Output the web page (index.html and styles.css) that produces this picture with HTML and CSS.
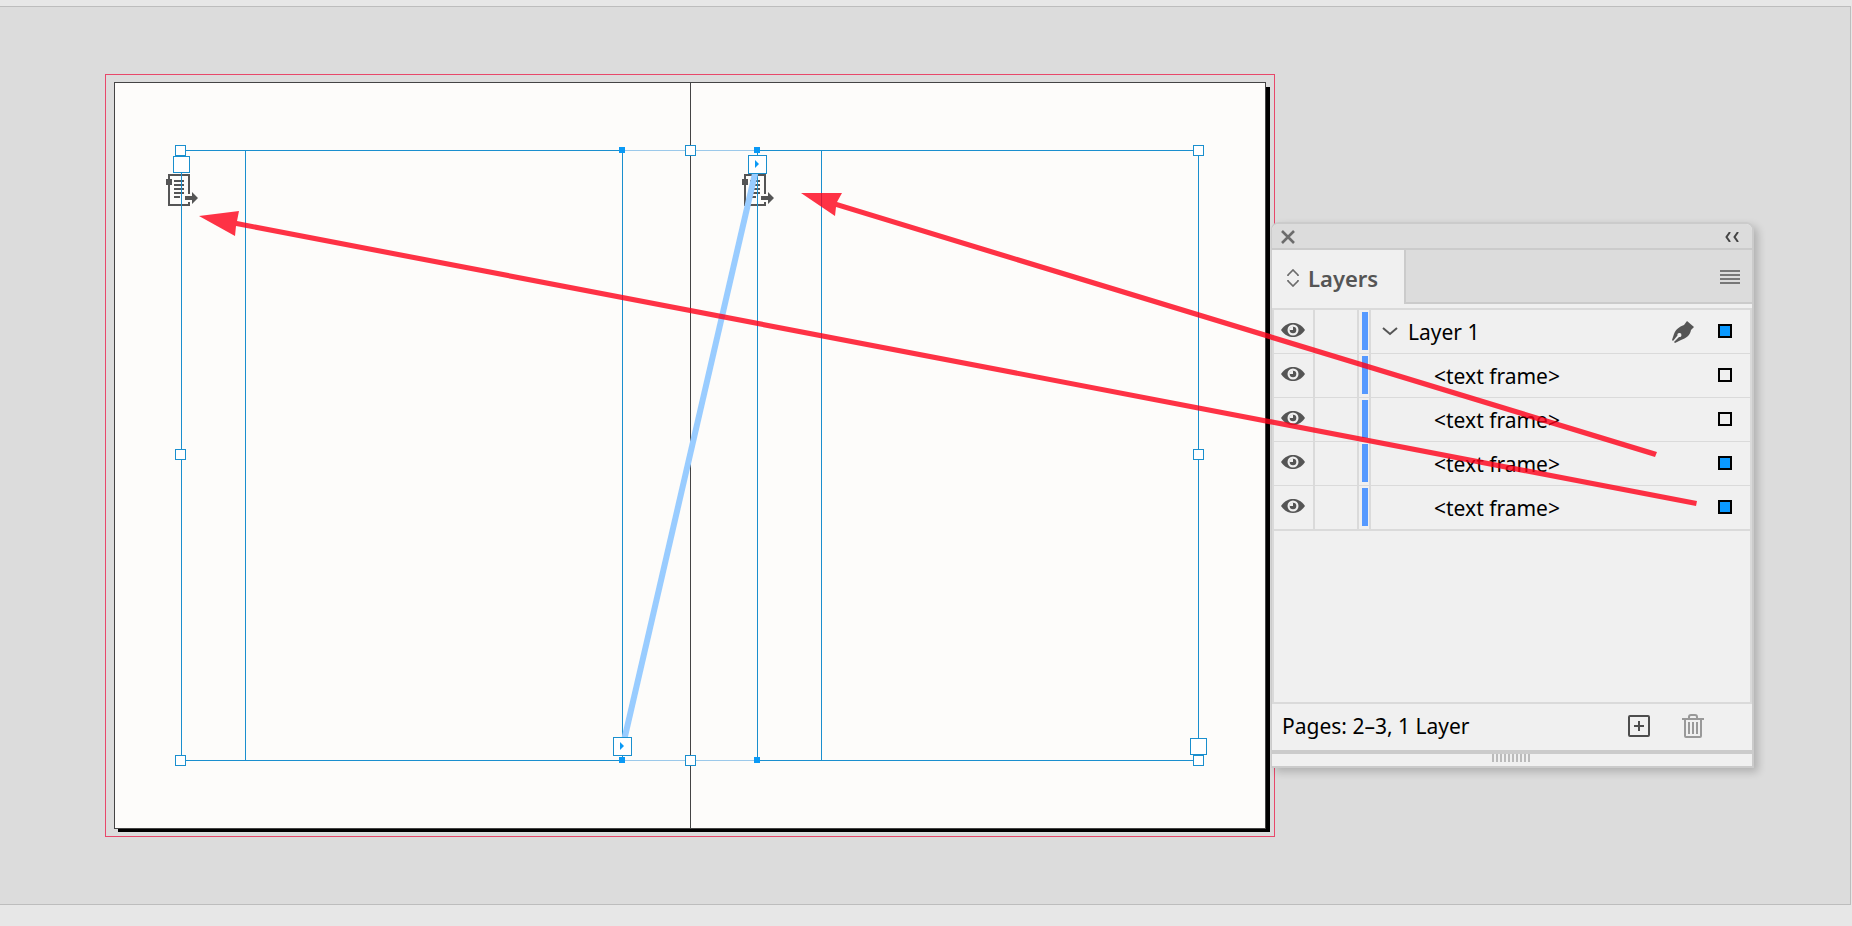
FILE: index.html
```html
<!DOCTYPE html>
<html lang="en">
<head>
    <meta charset="UTF-8">
    <meta name="viewport" content="width=device-width, initial-scale=1.0">
    <title>Layers</title>
    <link rel="stylesheet" href="styles.css">
</head>
<body>
    <!-- shared icons -->
    <svg class="defs" aria-hidden="true">
        <symbol id="eye" viewBox="0 0 24 16">
            <path d="M0 8C4 2.500 8 1 12 1s8 1.500 12 7c-4 5.500-8 7-12 7S4 13.500 0 8z" fill="#555"/>
            <circle cx="12" cy="8" r="5.500" fill="#f0f0f0"/>
            <circle cx="12" cy="8" r="3.300" fill="#555"/>
            <path d="M12 8V4.500L9 5.500 8.500 8z" fill="#f0f0f0"/>
        </symbol>
        <symbol id="autoflow" viewBox="166 174 32 32">
            <path d="M189 194v-19h-20v30h20v-3" fill="none" stroke="#555" stroke-width="2"/>
            <path d="M166 179h6v6h-6zM174 180h10v2h-10zM174 184h10v2h-10zM174 188h10v2h-10zM174 192h10v2h-10zM174 196h6v2h-6zM185 196h7v-4l6 6-6 6v-4h-7z" fill="#555"/>
        </symbol>
    </svg>

    <main class="workspace">
        <svg class="spread" viewBox="105 74 1170 763" role="img" aria-label="Pages 2-3">
            <rect x="105.500" y="74.500" width="1169" height="762" fill="none" stroke="#e8486a"/>
            <rect x="118" y="87" width="1152" height="745" fill="#000"/>
            <rect x="114.500" y="82.500" width="1151" height="746" fill="#fdfcfa" stroke="#444"/>
            <path d="M690.500 83V828" stroke="#444"/>

            <use href="#autoflow" x="166" y="174" width="32" height="32"/>
            <use href="#autoflow" x="742" y="174" width="32" height="32"/>

            <!-- text frames and margins -->
            <path d="M622 150.500H757M622 760.500H757" stroke="#9cc9ea"/>
            <path d="M181 150.500H622M757 150.500H1198M181 760.500H622M757 760.500H1198M181.500 150V760M245.500 150V760M622.500 150V760M757.500 150V760M821.500 150V760M1198.500 150V760" stroke="#1a8fce" fill="none"/>
            <path d="M757 165L623 745" stroke="#99ccff" stroke-width="6"/>

            <g fill="#fff" stroke="#1a8fce">
                <rect x="175.500" y="145.500" width="10" height="10"/>
                <rect x="685.500" y="145.500" width="10" height="10"/>
                <rect x="1193.500" y="145.500" width="10" height="10"/>
                <rect x="175.500" y="449.500" width="10" height="10"/>
                <rect x="1193.500" y="449.500" width="10" height="10"/>
                <rect x="175.500" y="755.500" width="10" height="10"/>
                <rect x="685.500" y="755.500" width="10" height="10"/>
                <rect x="1193.500" y="755.500" width="10" height="10"/>
                <rect x="173.500" y="156.500" width="16" height="16"/>
                <rect x="748.500" y="155.500" width="18" height="18"/>
                <rect x="613.500" y="737.500" width="18" height="18"/>
                <rect x="1190.500" y="738.500" width="16" height="16"/>
            </g>
            <path d="M755 160l4 4-4 4zM620 742l4 4-4 4zM619 147h6v6h-6zM754 147h6v6h-6zM619 757h6v6h-6zM754 757h6v6h-6z" fill="#0a99f5"/>
        </svg>

        <section class="panel" aria-label="Layers panel">
            <header class="titlebar">
                <button aria-label="Close">
                    <svg width="14" height="14" viewBox="0 0 14 14"><path d="M1 1l12 12M13 1L1 13" stroke="#6c6c6c" stroke-width="2.600"/></svg>
                </button>
                <button aria-label="Collapse">
                    <svg width="14" height="10" viewBox="0 0 14 10"><path d="M5 0L1.500 5 5 10M13 0L9.500 5 13 10" fill="none" stroke="#444" stroke-width="2"/></svg>
                </button>
            </header>

            <div class="tabs">
                <button class="tab">
                    <svg width="12" height="18" viewBox="0 0 12 18"><path d="M1 7V6l5-5 5 5v1M1 11v1l5 5 5-5v-1" fill="none" stroke="#6c6c6c" stroke-width="1.700"/></svg>
                    Layers
                </button>
                <button class="menu-btn" aria-label="Panel menu">
                    <svg width="20" height="14" viewBox="0 0 20 14"><path d="M0 1h20M0 5h20M0 9h20M0 13h20" stroke="#777" stroke-width="2"/></svg>
                </button>
            </div>

            <ul class="layers">
                <li>
                    <button class="eye" aria-label="Toggle visibility"><svg width="24" height="16"><use href="#eye"/></svg></button>
                    <span class="lock"></span>
                    <span class="color"></span>
                    <button class="expand" aria-label="Collapse layer">
                        <svg width="16" height="9" viewBox="0 0 16 9"><path d="M1 1l7 6 7-6" fill="none" stroke="#555" stroke-width="2"/></svg>
                    </button>
                    <span class="name">Layer 1</span>
                    <svg class="pen" width="22" height="22" viewBox="0 0 22 22">
                        <path d="M15 0L22 6 19 9C18 15 14 17 9 19L3 22 2 21 7 16A2 2 0 1 0 5.500 14.500L1 20 0 19 2 13C4 8 7 6 12 4z" fill="#555"/>
                    </svg>
                    <button class="select on" aria-label="Select items"></button>
                </li>
                <li>
                    <button class="eye" aria-label="Toggle visibility"><svg width="24" height="16"><use href="#eye"/></svg></button>
                    <span class="lock"></span>
                    <span class="color"></span>
                    <span class="name child">&lt;text frame&gt;</span>
                    <button class="select" aria-label="Select items"></button>
                </li>
                <li>
                    <button class="eye" aria-label="Toggle visibility"><svg width="24" height="16"><use href="#eye"/></svg></button>
                    <span class="lock"></span>
                    <span class="color"></span>
                    <span class="name child">&lt;text frame&gt;</span>
                    <button class="select" aria-label="Select items"></button>
                </li>
                <li>
                    <button class="eye" aria-label="Toggle visibility"><svg width="24" height="16"><use href="#eye"/></svg></button>
                    <span class="lock"></span>
                    <span class="color"></span>
                    <span class="name child">&lt;text frame&gt;</span>
                    <button class="select on" aria-label="Select items"></button>
                </li>
                <li>
                    <button class="eye" aria-label="Toggle visibility"><svg width="24" height="16"><use href="#eye"/></svg></button>
                    <span class="lock"></span>
                    <span class="color"></span>
                    <span class="name child">&lt;text frame&gt;</span>
                    <button class="select on" aria-label="Select items"></button>
                </li>
            </ul>

            <footer class="status">
                <span class="pages">Pages: 2–3, 1 Layer</span>
                <button aria-label="Create new layer">
                    <svg width="22" height="22" viewBox="0 0 22 22"><rect x="1" y="1" width="20" height="20" rx="1" fill="none" stroke="#4d4d4d" stroke-width="2"/><path d="M11 6v10M6 11h10" stroke="#4d4d4d" stroke-width="2"/></svg>
                </button>
                <button aria-label="Delete selected layers">
                    <svg width="22" height="24" viewBox="0 0 22 24"><path d="M0 5h22M7 5V3q0-2 2-2h4q2 0 2 2v2M3 5v17q0 1 1 1h14q1 0 1-1V5M7 8v12M11 8v12M15 8v12" fill="none" stroke="#999" stroke-width="2"/></svg>
                </button>
            </footer>
            <div class="grip"><span></span></div>
        </section>

        <!-- pointers from the selected rows to their frames -->
        <svg class="arrows" viewBox="198 190 1500 318" aria-hidden="true">
            <path d="M199 216L239 211 237 221 1697 501 1696 506 236 226 235 236z"/>
            <path d="M801 193L842 193 837 202 1657 452 1655 457 836 207 835 216z"/>
        </svg>
    </main>
</body>
</html>
```
FILE: styles.css
```css
* {
    box-sizing: border-box;
}

body {
    margin: 0;
    padding: 6px 0 21px;
    min-height: 100vh;
    display: flex;
    background-color: #e7e7e7;
    color: #000;
    font-family: "Noto Sans", "Open Sans", sans-serif;
    font-size: 21px;
}

button {
    display: flex;
    align-items: center;
    margin: 0;
    padding: 0;
    border: 0;
    background: none;
    color: inherit;
    font: inherit;
}

.defs {
    position: absolute;
    width: 0;
    height: 0;
}

.workspace {
    position: relative;
    flex: 1;
    margin-right: 1px;
    border: 1px solid #bdbdbd;
    border-left: 0;
    background-color: #dcdcdc;
    overflow: hidden;
}

/* things lying on the pasteboard */
.spread {
    position: absolute;
    left: 105px;
    top: 67px;
    width: 1170px;
}

.arrows {
    position: absolute;
    left: 198px;
    top: 183px;
    width: 1500px;
    fill: #ff0018;
    opacity: 0.8;
    pointer-events: none;
}

.panel {
    position: absolute;
    left: 1271px;
    top: 215px;
    width: 483px;
    border: 2px solid #cbcbcb;
    border-left-width: 1px;
    border-radius: 8px 8px 0 0;
    background-color: #f0f0f0;
    box-shadow: 4px 4px 8px rgba(0, 0, 0, 0.2);
}

.titlebar {
    display: flex;
    justify-content: space-between;
    align-items: center;
    height: 26px;
    padding: 2px 13px 0 9px;
    border-bottom: 2px solid #cbcbcb;
    border-radius: 6px 6px 0 0;
    background-color: #dcdcdc;
}

.tabs {
    display: flex;
    justify-content: space-between;
    height: 54px;
    margin-bottom: 4px;
    background-color: #dcdcdc;
    box-shadow: inset 0 -2px #cbcbcb;
}

.tab {
    gap: 9px;
    width: 134px;
    padding: 2px 0 0 15px;
    border-right: 2px solid #cbcbcb;
    background-color: #f0f0f0;
    color: #555;
    font-size: 22px;
    font-weight: 600;
}

.menu-btn {
    padding-right: 12px;
}

.layers {
    height: 396px;
    margin: 0;
    padding: 0;
    border: 2px solid #dadada;
    list-style: none;
}

.layers li {
    display: flex;
    align-items: center;
    height: 44px;
    padding-right: 18px;
    border-bottom: 1px solid #dadada;
}

.layers li:last-child {
    height: 45px;
    border-bottom-width: 2px;
}

.eye {
    justify-content: center;
    align-self: stretch;
    width: 41px;
    padding: 0 2px 4px 0;
    border-right: 2px solid #dadada;
}

.lock {
    align-self: stretch;
    width: 44px;
    border-right: 2px solid #dadada;
}

.color {
    align-self: stretch;
    width: 12px;
    padding: 2px 3px;
    border-right: 2px solid #dadada;
}

.color::before {
    content: "";
    display: block;
    width: 6px;
    height: 38px;
    background-color: #5599ff;
}

.expand {
    margin-left: 11px;
}

.name {
    flex: 1;
    margin-left: 10px;
    line-height: 28px;
}

.child {
    margin-left: 63px;
}

.pen {
    margin-right: 24px;
}

.select {
    width: 14px;
    height: 14px;
    margin-bottom: 2px;
    border: 2px solid #000;
}

.on {
    background-color: #0a99ff;
}

.status {
    display: flex;
    align-items: center;
    gap: 32px;
    height: 50px;
    padding: 0 48px 2px 10px;
    border-bottom: 4px solid #cbcbcb;
}

.pages {
    flex: 1;
}

.grip {
    display: flex;
    justify-content: center;
    height: 12px;
    padding-right: 2px;
}

.grip span {
    width: 38px;
    height: 8px;
    background: repeating-linear-gradient(90deg, #bbb 0 2px, transparent 2px 4px);
}
```
